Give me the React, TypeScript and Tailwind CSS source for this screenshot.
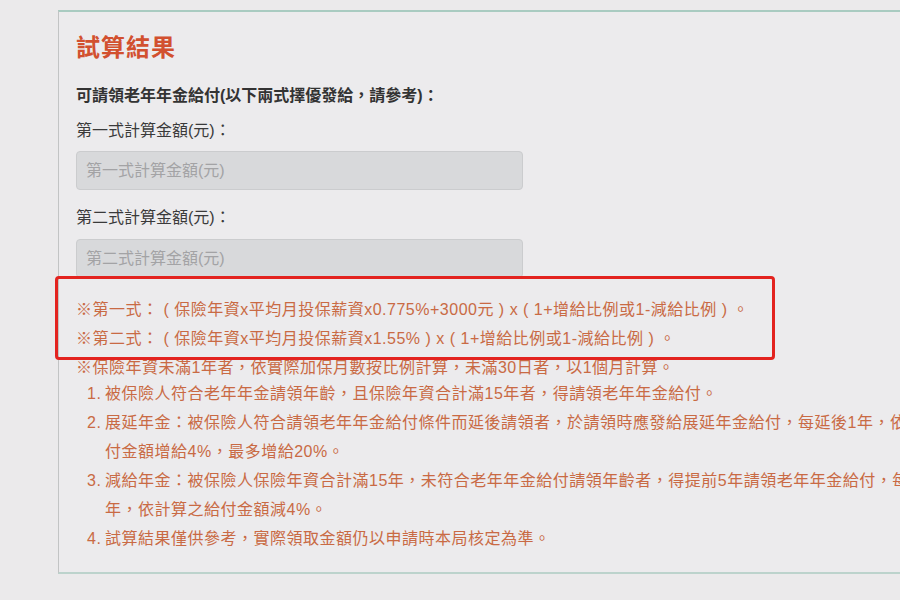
const font = { fontFamily: '"Liberation Sans", "Noto Sans CJK TC", sans-serif' };

const ResultInput = ({ placeholder }: { placeholder: string }) => (
  <div className="w-[447px] h-[39px] rounded-[4px] border border-[#cbccce] bg-[#d8d9db] pl-[9px] flex items-center text-[16px] text-[#a3a3a5]">
    {placeholder}
  </div>
);

const notes = [
  { n: "1.", lines: ["被保險人符合老年年金請領年齡，且保險年資合計滿15年者，得請領老年年金給付。"] },
  {
    n: "2.",
    lines: [
      "展延年金：被保險人符合請領老年年金給付條件而延後請領者，於請領時應發給展延年金給付，每延後1年，依計算之給",
      "付金額增給4%，最多增給20%。",
    ],
  },
  {
    n: "3.",
    lines: [
      "減給年金：被保險人保險年資合計滿15年，未符合老年年金給付請領年齡者，得提前5年請領老年年金給付，每提前1",
      "年，依計算之給付金額減4%。",
    ],
  },
  { n: "4.", lines: ["試算結果僅供參考，實際領取金額仍以申請時本局核定為準。"] },
];

export default function App() {
  return (
    <div className="w-[900px] h-[600px] overflow-hidden bg-[#ebeaeb] pt-[10px]" style={font}>
      <div className="ml-[58px] w-[900px] border-l border-b-2 border-t-2 border-l-[#c2c4c4] border-t-[#a9cbc1] border-b-[#bcd3cc] bg-[#ecebed] pl-[17px] pt-[19px] pb-[19px]">
        {/* Title */}
        <h2 className="text-[24px] leading-[34px] font-bold text-[#d2502f] tracking-[1px]">試算結果</h2>

        <p className="mt-[19px] text-[16px] leading-[24px] font-bold text-[#333333]">
          可請領老年年金給付(以下兩式擇優發給，請參考)：
        </p>

        <p className="mt-[11px] text-[16px] leading-[24px] text-[#3a3a3a]">第一式計算金額(元)：</p>
        <div className="mt-[8px]">
          <ResultInput placeholder="第一式計算金額(元)" />
        </div>

        <p className="mt-[16px] text-[16px] leading-[24px] text-[#3a3a3a]">第二式計算金額(元)：</p>
        <div className="mt-[9px]">
          <ResultInput placeholder="第二式計算金額(元)" />
        </div>

        {/* Notes */}
        <div className="relative mt-[17px] text-[16px] leading-[29px] text-[#c96a44] tracking-[0.5px] whitespace-pre">
          <p>※第一式： ( 保險年資x平均月投保薪資x0.775%+3000元 ) x ( 1+增給比例或1-減給比例 ) 。</p>
          <p>※第二式： ( 保險年資x平均月投保薪資x1.55% ) x ( 1+增給比例或1-減給比例 ) 。</p>
          <p>※保險年資未滿1年者，依實際加保月數按比例計算，未滿30日者，以1個月計算。</p>
          <ol className="pl-[11px] -mt-[3px]">
            {notes.map((item) => (
              <li key={item.n} className="flex">
                <span className="w-[18px] shrink-0">{item.n}</span>
                <div>
                  {item.lines.map((l) => (
                    <div key={l}>{l}</div>
                  ))}
                </div>
              </li>
            ))}
          </ol>

          {/* annotation box */}
          <div className="absolute left-[-21px] top-[-19px] w-[720px] h-[84px] border-[3px] border-[#e3231f] rounded-[4px] pointer-events-none" />
        </div>
      </div>
    </div>
  );
}
